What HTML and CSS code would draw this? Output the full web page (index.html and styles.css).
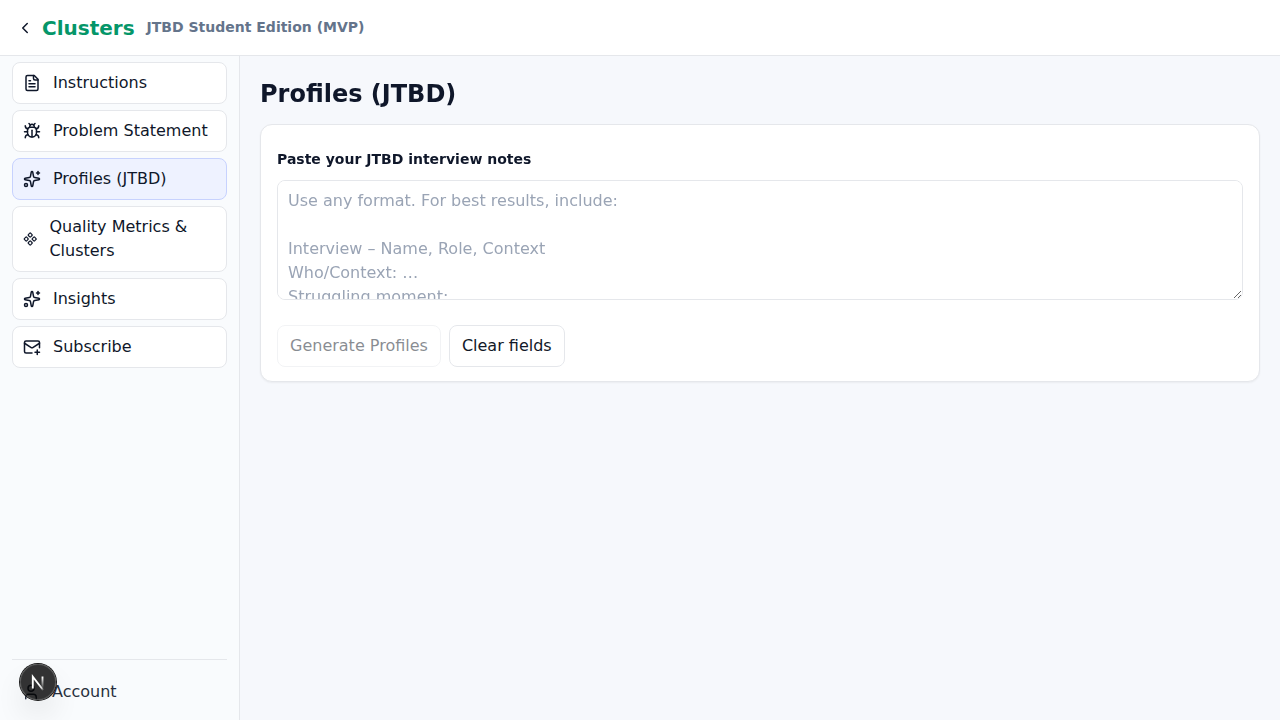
FILE: index.html
```html
<!DOCTYPE html>
<html lang="en">
<head>
<meta charset="utf-8">
<meta name="viewport" content="width=device-width, initial-scale=1">
<title>Clusters – Profiles (JTBD)</title>
<link rel="stylesheet" href="styles.css">
</head>
<body>
<header class="topbar">
  <a class="back" href="#" aria-label="Back">
    <svg class="icon" viewBox="0 0 24 24"><path d="m15 18-6-6 6-6"/></svg>
  </a>
  <span class="brand">Clusters</span>
  <span class="edition">JTBD Student Edition (MVP)</span>
</header>
<div class="shell">
  <aside class="sidebar">
    <nav class="nav">
      <a class="nav-item" href="#">
        <svg class="icon" viewBox="0 0 24 24"><path d="M15 2H6a2 2 0 0 0-2 2v16a2 2 0 0 0 2 2h12a2 2 0 0 0 2-2V7Z"/><path d="M14 2v4a2 2 0 0 0 2 2h4"/><path d="M10 9H8"/><path d="M16 13H8"/><path d="M16 17H8"/></svg>
        <span>Instructions</span>
      </a>
      <a class="nav-item" href="#">
        <svg class="icon" viewBox="0 0 24 24"><path d="m8 2 1.88 1.88"/><path d="M14.12 3.88 16 2"/><path d="M9 7.13v-1a3.003 3.003 0 1 1 6 0v1"/><path d="M12 20c-3.3 0-6-2.7-6-6v-3a4 4 0 0 1 4-4h4a4 4 0 0 1 4 4v3c0 3.3-2.7 6-6 6"/><path d="M12 20v-9"/><path d="M6.53 9C4.6 8.8 3 7.1 3 5"/><path d="M6 13H2"/><path d="M3 21c0-2.1 1.7-3.9 3.8-4"/><path d="M20.97 5c0 2.1-1.6 3.8-3.5 4"/><path d="M22 13h-4"/><path d="M17.2 17c2.1.1 3.8 1.9 3.8 4"/></svg>
        <span>Problem Statement</span>
      </a>
      <a class="nav-item active" href="#" aria-current="page">
        <svg class="icon" viewBox="0 0 24 24"><path d="M11.017 2.814a1 1 0 0 1 1.966 0l1.051 5.558a2 2 0 0 0 1.594 1.594l5.558 1.051a1 1 0 0 1 0 1.966l-5.558 1.051a2 2 0 0 0-1.594 1.594l-1.051 5.558a1 1 0 0 1-1.966 0l-1.051-5.558a2 2 0 0 0-1.594-1.594l-5.558-1.051a1 1 0 0 1 0-1.966l5.558-1.051a2 2 0 0 0 1.594-1.594z"/><path d="M20 2v4"/><path d="M22 4h-4"/><circle cx="4" cy="20" r="2"/></svg>
        <span>Profiles (JTBD)</span>
      </a>
      <a class="nav-item" href="#">
        <svg class="icon" viewBox="0 0 24 24"><path d="M15.536 11.293a1 1 0 0 0 0 1.414l2.376 2.377a1 1 0 0 0 1.414 0l2.377-2.377a1 1 0 0 0 0-1.414l-2.377-2.377a1 1 0 0 0-1.414 0z"/><path d="M2.297 11.293a1 1 0 0 0 0 1.414l2.377 2.377a1 1 0 0 0 1.414 0l2.377-2.377a1 1 0 0 0 0-1.414L6.088 8.916a1 1 0 0 0-1.414 0z"/><path d="M8.916 17.912a1 1 0 0 0 0 1.415l2.377 2.376a1 1 0 0 0 1.414 0l2.377-2.376a1 1 0 0 0 0-1.415l-2.377-2.376a1 1 0 0 0-1.414 0z"/><path d="M8.916 4.674a1 1 0 0 0 0 1.414l2.377 2.376a1 1 0 0 0 1.414 0l2.377-2.376a1 1 0 0 0 0-1.414l-2.377-2.377a1 1 0 0 0-1.414 0z"/></svg>
        <span>Quality Metrics &amp; Clusters</span>
      </a>
      <a class="nav-item" href="#">
        <svg class="icon" viewBox="0 0 24 24"><path d="M11.017 2.814a1 1 0 0 1 1.966 0l1.051 5.558a2 2 0 0 0 1.594 1.594l5.558 1.051a1 1 0 0 1 0 1.966l-5.558 1.051a2 2 0 0 0-1.594 1.594l-1.051 5.558a1 1 0 0 1-1.966 0l-1.051-5.558a2 2 0 0 0-1.594-1.594l-5.558-1.051a1 1 0 0 1 0-1.966l5.558-1.051a2 2 0 0 0 1.594-1.594z"/><path d="M20 2v4"/><path d="M22 4h-4"/><circle cx="4" cy="20" r="2"/></svg>
        <span>Insights</span>
      </a>
      <a class="nav-item" href="#">
        <svg class="icon" viewBox="0 0 24 24"><path d="M22 13V6a2 2 0 0 0-2-2H4a2 2 0 0 0-2 2v12c0 1.100.9 2 2 2h8"/><path d="m22 7-8.970 5.700a1.940 1.940 0 0 1-2.060 0L2 7"/><path d="M19 16v6"/><path d="M16 19h6"/></svg>
        <span>Subscribe</span>
      </a>
    </nav>
    <div class="sidebar-foot">
      <a class="account" href="#">
        <svg class="icon" viewBox="0 0 24 24"><path d="M19 21v-2a4 4 0 0 0-4-4H9a4 4 0 0 0-4 4v2"/><circle cx="12" cy="7" r="4"/></svg>
        <span>Account</span>
      </a>
    </div>
  </aside>
  <main class="main">
    <h1 class="title">Profiles (JTBD)</h1>
    <section class="card">
      <label class="label" for="notes">Paste your JTBD interview notes</label>
      <textarea class="notes" id="notes" placeholder="Use any format. For best results, include:

Interview – Name, Role, Context
Who/Context: …
Struggling moment:"></textarea>
      <div class="actions">
        <button class="button" type="button" disabled>Generate Profiles</button>
        <button class="button" type="button">Clear fields</button>
      </div>
    </section>
  </main>
</div>
<button class="dev-badge" type="button" aria-label="Open developer tools">
  <svg viewBox="0 0 36 36" fill="none">
    <defs>
      <linearGradient id="diagonal" gradientUnits="userSpaceOnUse" x1="19" y1="20" x2="24" y2="26"><stop stop-color="#fff"/><stop offset="0.600" stop-color="#fff" stop-opacity="0.800"/><stop offset="1" stop-color="#fff" stop-opacity="0"/></linearGradient>
      <linearGradient id="upright" gradientUnits="userSpaceOnUse" x1="22" y1="13" x2="22" y2="25"><stop stop-color="#fff"/><stop offset="1" stop-color="#fff" stop-opacity="0"/></linearGradient>
    </defs>
    <path d="M23.500 26.500 12.800 12.700v11.900" stroke="url(#diagonal)" stroke-width="1.860"/>
    <path d="M22.500 12.500v12" stroke="url(#upright)" stroke-width="1.860"/>
  </svg>
</button>
</body>
</html>
```
FILE: styles.css
```css
*, *::before, *::after { box-sizing: border-box; }

body {
  margin: 0;
  min-height: 100vh;
  display: flex;
  flex-direction: column;
  background: #f6f8fc;
  color: #0f172a;
  font: 16px/24px "DejaVu Sans", sans-serif;
}

a { color: inherit; text-decoration: none; }

.icon {
  width: 18px;
  height: 18px;
  fill: none;
  stroke: currentColor;
  stroke-width: 2;
  stroke-linecap: round;
  stroke-linejoin: round;
}

.topbar {
  display: flex;
  align-items: center;
  height: 56px;
  padding: 0 16px;
  background: #fff;
  border-bottom: 1px solid #e5e7eb;
}

.back { display: flex; margin-right: 8px; }
.brand { margin-right: 12px; color: #059669; font-size: 20px; font-weight: 700; }
.edition { color: #64748b; font-size: 14px; line-height: 21px; font-weight: 600; }

.shell { flex: 1; display: flex; }

.sidebar {
  flex: none;
  width: 240px;
  display: flex;
  flex-direction: column;
  justify-content: space-between;
  padding: 6px 12px 8px;
  background: #f9fbfd;
  border-right: 1px solid #e5e7eb;
}

.nav { display: flex; flex-direction: column; gap: 6px; }

.nav-item {
  display: flex;
  align-items: center;
  gap: 12px;
  padding: 8px 10px;
  background: #fff;
  border: 1px solid #e5e7eb;
  border-radius: 8px;
}

.nav-item.active { background: #eef2ff; border-color: #c7d2fe; }

.sidebar-foot { padding-top: 12px; border-top: 1px solid #e5e7eb; }

.account {
  display: flex;
  align-items: center;
  gap: 12px;
  padding: 8px 10px;
  opacity: 0.9;
}

.main { flex: 1; min-width: 0; padding: 20px; }
.title { margin: 0 0 12px; font-size: 24px; line-height: 36px; font-weight: 700; }

.card {
  padding: 24px 16px 14px;
  background: #fff;
  border: 1px solid #e5e7eb;
  border-radius: 12px;
  box-shadow: 0 1px 2px rgba(0, 0, 0, 0.05);
}

.label { display: block; margin-bottom: 10px; font-size: 14px; line-height: 21px; font-weight: 600; }

.notes {
  display: block;
  width: 100%;
  height: 120px;
  padding: 8px 10px;
  background: #fff;
  border: 1px solid #e5e7eb;
  border-radius: 8px;
  color: inherit;
  font: inherit;
  resize: vertical;
  overflow: auto;
}

.notes::placeholder { color: #9aa4b5; opacity: 1; }

.actions { display: flex; gap: 8px; margin-top: 25px; }

.button {
  padding: 8px 12px;
  background: #fff;
  border: 1px solid #e5e7eb;
  border-radius: 8px;
  color: #111827;
  font: inherit;
}

.button:disabled { opacity: 0.5; }

.dev-badge {
  position: fixed;
  left: 20px;
  bottom: 20px;
  width: 36px;
  height: 36px;
  padding: 0;
  border: 0;
  border-radius: 50%;
  background: rgba(0, 0, 0, 0.8);
  box-shadow: 0 0 0 1px #171717, inset 0 0 0 1px rgba(255, 255, 255, 0.14), 0 16px 32px -8px rgba(0, 0, 0, 0.24);
}

.dev-badge svg { display: block; width: 100%; height: 100%; }
```
